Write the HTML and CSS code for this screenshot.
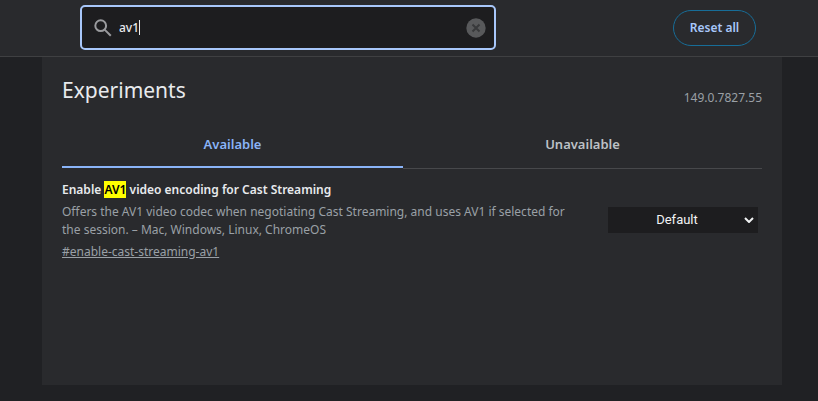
FILE: index.html
```html
<!DOCTYPE html>
<html lang="en">
<head>
<meta charset="utf-8">
<title>Experiments</title>
<link rel="stylesheet" href="styles.css">
</head>
<body>
<header class="toolbar">
  <div class="search">
    <svg class="search-icon" viewBox="0 0 18 18" aria-hidden="true"><circle cx="6.7" cy="6.7" r="5.4"/><path d="M10.6 10.6 16.8 16.8"/></svg>
    <input class="search-input" type="text" value="av1" aria-label="Search flags">
    <span class="caret"></span>
    <button class="clear" type="button" aria-label="Clear search">
      <svg viewBox="0 0 20 20" aria-hidden="true"><circle cx="10" cy="10" r="9.7"/><path d="M6.5 6.5 13.5 13.5M13.5 6.5 6.5 13.5"/></svg>
    </button>
  </div>
  <button class="reset" type="button">Reset all</button>
</header>
<main class="card">
  <div class="heading">
    <h1>Experiments</h1>
    <span class="version">149.0.7827.55</span>
  </div>
  <div class="tabs" role="tablist">
    <button class="tab selected" type="button" role="tab" aria-selected="true">Available</button>
    <button class="tab" type="button" role="tab" aria-selected="false">Unavailable</button>
  </div>
  <section class="experiment">
    <div class="info">
      <h2><label for="flag">Enable <mark>AV1</mark> video encoding for Cast Streaming</label></h2>
      <p>Offers the AV1 video codec when negotiating Cast Streaming, and uses AV1 if selected for the session. – Mac, Windows, Linux, ChromeOS</p>
      <a href="#enable-cast-streaming-av1">#enable-cast-streaming-av1</a>
    </div>
    <div class="picker">
      <select id="flag"><option>Default</option><option>Enabled</option><option>Disabled</option></select>
      <svg class="chevron" viewBox="0 0 10 6" aria-hidden="true"><path d="M1 1 5 5 9 1"/></svg>
    </div>
  </section>
</main>
</body>
</html>
```
FILE: styles.css
```css
* {
  box-sizing: border-box;
}

body {
  margin: 0;
  min-height: 100vh;
  display: flex;
  flex-direction: column;
  background: #202124;
  color: #e8eaed;
  font: 12px/18px "Segoe UI", "Noto Sans", sans-serif;
}

button,
input,
select {
  font: inherit;
  margin: 0;
}

.toolbar {
  display: flex;
  align-items: center;
  justify-content: space-between;
  height: 57px;
  padding: 0 62px 1px 80px;
  background: #292a2d;
  border-bottom: 1px solid #3f4042;
}

.search {
  position: relative;
  display: flex;
  align-items: center;
  flex: 0 1 416px;
  height: 45px;
  padding: 0 8px 0 12px;
  background: #1d1d1f;
  border: 2px solid #a8c7fa;
  border-radius: 5px;
}

.search-icon {
  flex: none;
  width: 18px;
  height: 18px;
  fill: none;
  stroke: #9a9b9e;
  stroke-width: 2;
}

.search-input {
  flex: 1;
  min-width: 0;
  padding: 0 0 0 7px;
  border: 0;
  outline: 0;
  background: none;
  color: #e8eaed;
  font-size: 12px;
  font-weight: 500;
}

.caret {
  position: absolute;
  left: 57px;
  top: 13px;
  width: 1px;
  height: 15px;
  background: #e8eaed;
}

.clear {
  flex: none;
  width: 20px;
  height: 20px;
  padding: 0;
  border: 0;
  background: none;
}

.clear svg {
  display: block;
  fill: #58595b;
  stroke: #38393b;
  stroke-width: 2;
}

.clear circle {
  stroke: none;
}

.reset {
  width: 83px;
  height: 36px;
  padding: 0;
  background: none;
  border: 1px solid #176d98;
  border-radius: 18px;
  color: #a8c7fa;
  font-weight: 600;
}

.card {
  flex: 1;
  margin: 0 36px 16px 42px;
  padding: 18px 20px;
  background: #292a2d;
}

.heading {
  display: flex;
  align-items: flex-start;
  justify-content: space-between;
}

h1 {
  margin: 0;
  font-size: 21px;
  line-height: 30px;
  font-weight: 400;
}

.version {
  padding-top: 14px;
  color: #9aa0a6;
}

.tabs {
  display: flex;
  align-items: flex-start;
  margin-top: 14px;
}

.tab {
  flex: 359;
  height: 48px;
  padding: 0 0 2px;
  background: none;
  border: 0;
  border-bottom: 1px solid #47484b;
  color: #bdc1c6;
  font-size: 13px;
  font-weight: 600;
}

.selected {
  flex: 341;
  height: 47px;
  padding: 0;
  border-bottom: 2px solid #8ab4f8;
  color: #8ab4f8;
}

.experiment {
  display: flex;
  justify-content: space-between;
  gap: 20px;
  padding: 12px 4px 0 0;
}

.info {
  flex: 0 1 520px;
}

h2 {
  margin: 0 0 4px;
  font-size: 12px;
  line-height: 18px;
  font-weight: 600;
}

mark {
  background: #ff0;
  color: #000;
}

p {
  margin: 0 0 4px;
  color: #9aa0a6;
}

a {
  color: #9aa0a6;
}

.picker {
  position: relative;
  flex: none;
  width: 150px;
  padding-top: 26px;
}

select {
  display: block;
  appearance: none;
  width: 100%;
  height: 26px;
  padding: 0 12px 0 0;
  background: #1d1d1f;
  border: 0;
  color: #f1f3f4;
  font-family: Roboto, sans-serif;
  font-size: 13px;
  text-align: center;
  text-align-last: center;
}

.chevron {
  position: absolute;
  right: 4px;
  top: 36px;
  width: 10px;
  height: 6px;
  fill: none;
  stroke: #f1f3f4;
  stroke-width: 2;
  pointer-events: none;
}
```
